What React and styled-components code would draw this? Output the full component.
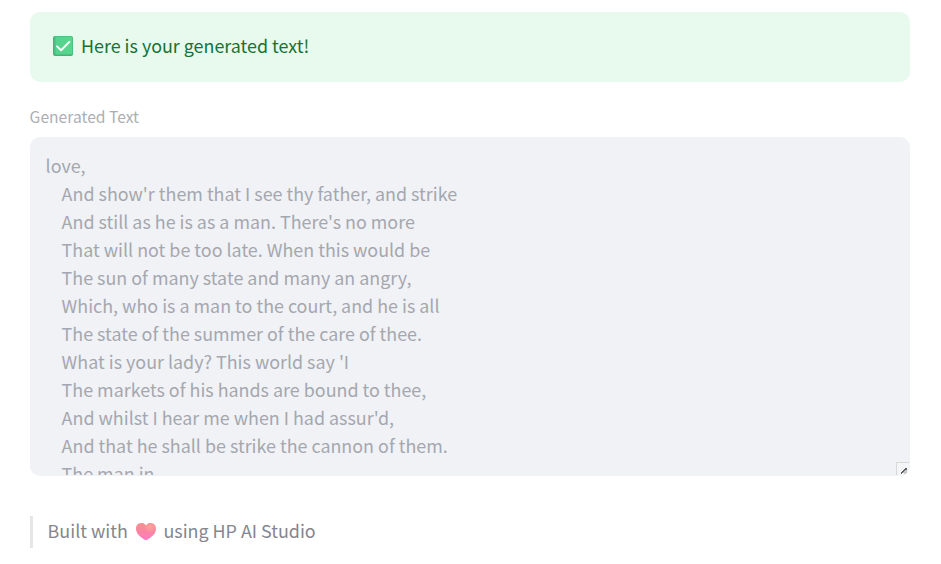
import React from 'react';
import styled, { createGlobalStyle } from 'styled-components';

const GlobalStyle = createGlobalStyle`
  * { box-sizing: border-box; }
  body {
    margin: 0;
    background: #fff;
    font-family: "Noto Sans CJK SC", "Noto Sans", sans-serif;
    font-size: 17.9px;
    line-height: 28px;
    overflow: hidden;
  }
`;

const Page = styled.main`
  display: flex;
  flex-direction: column;
  height: 564px;
  padding: 12px 31px 0 30px;
`;

const Alert = styled.div`
  display: flex;
  align-items: center;
  flex: none;
  height: 70px;
  padding: 0 23px 2px;
  border-radius: 10px;
  background: #e8f9ee;
  color: #177233;
`;

const AlertText = styled.span`
  margin-left: 8px;
  padding-bottom: 2px;
  white-space: nowrap;
`;

const Label = styled.label`
  margin: 21px 0 0 -0.4px;
  height: 34px;
  font-size: 15.65px;
  line-height: 28px;
  color: #adaeb3;
`;

const TextBox = styled.div`
  position: relative;
  flex: none;
  height: 339px;
  padding: 14px 16px 0 15.6px;
  border-radius: 10px;
  background: #f0f2f6;
  color: #a5a7ae;
  overflow: hidden;
`;

const Lines = styled.pre`
  margin: 0;
  height: 324px;
  overflow: hidden;
  font: inherit;
`;

const Grip = styled.svg`
  position: absolute;
  right: 0;
  bottom: 0;
`;

const Quote = styled.blockquote`
  display: flex;
  align-items: center;
  flex: none;
  height: 32px;
  margin: 40px 0 0;
  padding-left: 14.6px;
  border-left: 3px solid #e6e6e8;
  color: #85868e;
  white-space: nowrap;
`;

const QuoteText = styled.span`
  padding-bottom: 4px;
`;

const Heart = styled.svg`
  margin: 0 7.4px 0 8.2px;
`;

const verse = `love,
    And show'r them that I see thy father, and strike
    And still as he is as a man. There's no more
    That will not be too late. When this would be
    The sun of many state and many an angry,
    Which, who is a man to the court, and he is all
    The state of the summer of the care of thee.
    What is your lady? This world say 'I
    The markets of his hands are bound to thee,
    And whilst I hear me when I had assur'd,
    And that he shall be strike the cannon of them.
    The man in`;

const heartOutline =
  'M10 2.4 C8.6 .4 6.8 0 5 .1 C2 .2 0 2.6 0 5.8 C0 11 4.8 14.4 8.6 16.8 Q10 17.6 11.4 16.8 C15.2 14.4 20 11 20 5.8 C20 2.6 18 .2 15 .1 C13.2 0 11.4 .4 10 2.4Z';

function CheckIcon() {
  return (
    <svg width="20" height="20" viewBox="0 0 20 20" aria-hidden="true">
      <defs>
        <linearGradient id="check-face" x1="0" y1="0" x2="1" y2="0">
          <stop offset="0" stopColor="#43b981" />
          <stop offset="0.16" stopColor="#55d390" />
          <stop offset="1" stopColor="#58d68b" />
        </linearGradient>
      </defs>
      <rect width="20" height="20" rx="2" fill="#46b178" />
      <rect x="0.6" y="0.6" width="18.8" height="18" rx="1.6" fill="url(#check-face)" />
      <path d="M4 10.4 L8.1 14.3 L16.4 5.9" fill="none" stroke="#f7fff9" strokeWidth="2" strokeLinecap="round" strokeLinejoin="round" />
    </svg>
  );
}

function HeartIcon() {
  return (
    <Heart width="20" height="18" viewBox="0 0 20 18" aria-hidden="true">
      <defs>
        <linearGradient id="heart-fill" x1="0" y1="0" x2="0" y2="1">
          <stop offset="0" stopColor="#f58f8f" />
          <stop offset="0.5" stopColor="#fa85a2" />
          <stop offset="1" stopColor="#ff7bc8" />
        </linearGradient>
        <radialGradient id="heart-glow" cx="0.72" cy="0.22" r="0.34">
          <stop offset="0" stopColor="#ffab9f" stopOpacity="0.7" />
          <stop offset="1" stopColor="#ffab9f" stopOpacity="0" />
        </radialGradient>
      </defs>
      <path d={heartOutline} fill="url(#heart-fill)" />
      <path d={heartOutline} fill="url(#heart-glow)" />
    </Heart>
  );
}

export default function App() {
  return (
    <>
      <GlobalStyle />
      <Page>
        <Alert>
          <CheckIcon />
          <AlertText>Here is your generated text!</AlertText>
        </Alert>
        <Label>Generated Text</Label>
        <TextBox>
          <Lines>{verse}</Lines>
          <Grip width="14" height="14" viewBox="0 0 14 14" shapeRendering="crispEdges" aria-hidden="true">
            <path d="M0 0H13V1H1V13H0Z" fill="#d9d9d9" />
            <path d="M1 1H14V8L8 14H1Z" fill="#f4f5f7" />
            <path d="M9 8H11V11H10V12H8V11H7V10H8V9H9Z" fill="#c6c7c9" />
            <path d="M9 6H11V8H9V9H8V10H7V11H6V12H5V10H6V9H7V8H8V7H9Z" fill="#5f6166" />
          </Grip>
        </TextBox>
        <Quote>
          <QuoteText>Built with</QuoteText>
          <HeartIcon />
          <QuoteText>using HP AI Studio</QuoteText>
        </Quote>
      </Page>
    </>
  );
}
